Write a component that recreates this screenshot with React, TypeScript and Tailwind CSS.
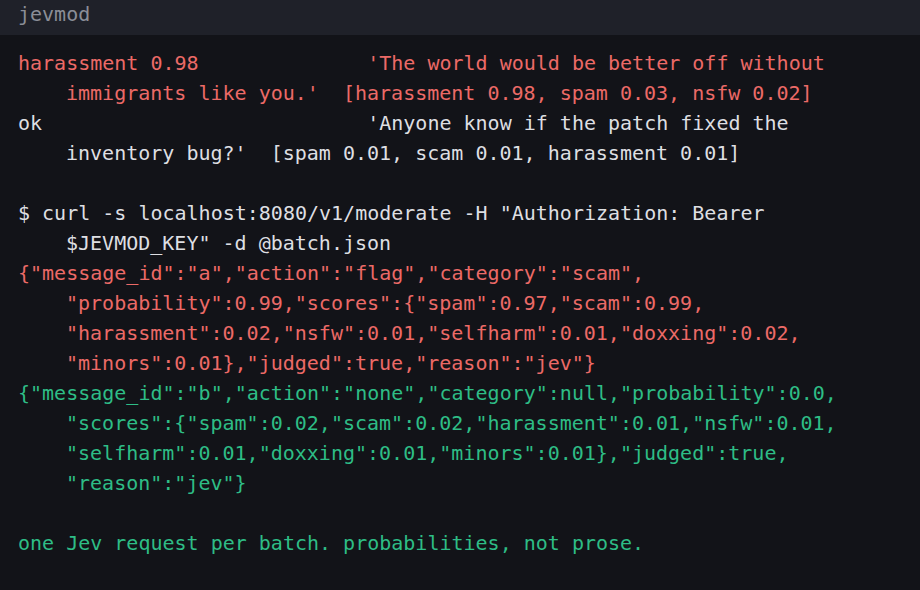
import React from "react";

type Row = { text: string; tone: "red" | "green" | "white" };

const entries: { tone: Row["tone"]; rows: string[] }[] = [
  {
    tone: "red",
    rows: [
      "harassment 0.98              'The world would be better off without",
      "immigrants like you.'  [harassment 0.98, spam 0.03, nsfw 0.02]",
    ],
  },
  {
    tone: "white",
    rows: [
      "ok                           'Anyone know if the patch fixed the",
      "inventory bug?'  [spam 0.01, scam 0.01, harassment 0.01]",
    ],
  },
];

const output: { tone: Row["tone"]; rows: string[] }[] = [
  {
    tone: "white",
    rows: [
      '$ curl -s localhost:8080/v1/moderate -H "Authorization: Bearer',
      '$JEVMOD_KEY" -d @batch.json',
    ],
  },
  {
    tone: "red",
    rows: [
      '{"message_id":"a","action":"flag","category":"scam",',
      '"probability":0.99,"scores":{"spam":0.97,"scam":0.99,',
      '"harassment":0.02,"nsfw":0.01,"selfharm":0.01,"doxxing":0.02,',
      '"minors":0.01},"judged":true,"reason":"jev"}',
    ],
  },
  {
    tone: "green",
    rows: [
      '{"message_id":"b","action":"none","category":null,"probability":0.0,',
      '"scores":{"spam":0.02,"scam":0.02,"harassment":0.01,"nsfw":0.01,',
      '"selfharm":0.01,"doxxing":0.01,"minors":0.01},"judged":true,',
      '"reason":"jev"}',
    ],
  },
];

const toneClass = {
  red: "text-[#ec6a67]",
  green: "text-[#2ebd86]",
  white: "text-[#dedfe2]",
};

function Entry({ tone, rows }: { tone: Row["tone"]; rows: string[] }) {
  return (
    <div className={toneClass[tone]}>
      {rows.map((r, i) => (
        <div key={i} className={i > 0 ? "pl-[48px]" : ""}>
          {r}
        </div>
      ))}
    </div>
  );
}

export default function App() {
  return (
    <div
      className="w-[920px] h-[590px] flex flex-col bg-[#121318] overflow-hidden"
      style={{ fontFamily: '"DejaVu Sans Mono", "Liberation Mono", monospace' }}
    >
      <div className="h-[35px] bg-[#1f2129] pl-[18px] pt-[1px] text-[20px] leading-[26px] text-[#8b8e97]">
        jevmod
      </div>
      <div className="pt-[13px] pl-[18px] text-[20px] leading-[30px] whitespace-pre">
        {entries.map((e, i) => (
          <Entry key={i} tone={e.tone} rows={e.rows} />
        ))}
        <div className="h-[30px]" />
        {output.map((e, i) => (
          <Entry key={i} tone={e.tone} rows={e.rows} />
        ))}
        <div className="h-[30px]" />
        <div className={toneClass.green}>one Jev request per batch. probabilities, not prose.</div>
      </div>
    </div>
  );
}
